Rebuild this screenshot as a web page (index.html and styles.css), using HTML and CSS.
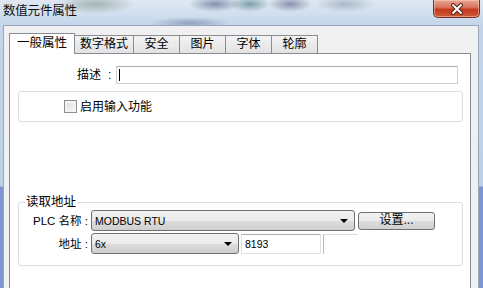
FILE: index.html
```html
<!DOCTYPE html>
<html lang="zh-CN">

<head>
	<meta charset="UTF-8">
	<meta name="viewport" content="width=device-width, initial-scale=1.0">
	<title>数值元件属性</title>
	<link rel="stylesheet" href="styles.css">
</head>

<body>
	<div class="window">
		<div class="titlebar">
			<span class="title">数值元件属性</span>
			<div class="close-btn">
				<svg width="18" height="12" viewBox="0 0 18 12">
					<path d="M5 2 L13 10 M13 2 L5 10" stroke="#5a2418" stroke-width="4" stroke-linecap="round" />
					<path d="M5 2 L13 10 M13 2 L5 10" stroke="#fff" stroke-width="2" stroke-linecap="round" />
				</svg>
			</div>
		</div>
		<div class="frame">
			<div class="client">
				<div class="tabs">
					<div class="tab active">一般属性</div>
					<div class="tab">数字格式</div>
					<div class="tab">安全</div>
					<div class="tab">图片</div>
					<div class="tab">字体</div>
					<div class="tab">轮廓</div>
				</div>
				<div class="panel">
					<div class="desc-row">
						<span class="lbl">描述<span class="colon">:</span></span>
						<div class="textbox desc"><span class="caret"></span></div>
					</div>
					<div class="group input-group">
						<span class="checkbox"></span>
						<span>启用输入功能</span>
					</div>
					<fieldset class="group addr-group">
						<legend>读取地址</legend>
						<div class="addr-grid">
							<span class="lbl">PLC 名称 :</span>
							<div class="ctrl-row">
								<div class="combo plc">MODBUS RTU<span class="arrow"></span></div>
								<div class="btn">设置...</div>
							</div>
							<span class="lbl">地址 :</span>
							<div class="ctrl-row">
								<div class="combo addr">6x<span class="arrow"></span></div>
								<div class="textbox num">8193</div>
								<div class="ghost"></div>
							</div>
						</div>
					</fieldset>
				</div>
			</div>
		</div>
	</div>
</body>

</html>
```

FILE: styles.css
```css
:root {
	--glass: #c4d5ea;
	--glass-dark: #7d95d3;
	--face: #f0f0f0;
	--tab-border: #898c95;
	--group-border: #d5dfe5;
	--ctrl-border: #707070;
	--font: "Liberation Sans", "Noto Sans CJK SC", sans-serif;
}

* {
	box-sizing: border-box;
}

body {
	margin: 0;
	padding: 0;
	font-family: var(--font);
	font-size: 12px;
	color: #000;
}

.window {
	display: flex;
	flex-direction: column;
	width: 483px;
	height: 288px;
	overflow: hidden;
	background: linear-gradient(to bottom, var(--glass) 0, #bcd0ea 186px, var(--glass-dark) 187px, var(--glass-dark) 100%);
}

/* Aero glass title bar */
.titlebar {
	display: flex;
	align-items: flex-start;
	height: 25px;
	padding-left: 3px;
	background:
		radial-gradient(ellipse 40px 10px at 95px 4px, rgba(120, 140, 130, .55), transparent),
		radial-gradient(ellipse 26px 8px at 215px 4px, rgba(70, 90, 130, .6), transparent),
		radial-gradient(ellipse 20px 8px at 250px 4px, rgba(60, 110, 120, .6), transparent),
		radial-gradient(ellipse 22px 8px at 290px 4px, rgba(80, 90, 130, .6), transparent),
		radial-gradient(ellipse 30px 8px at 345px 4px, rgba(120, 140, 160, .5), transparent),
		radial-gradient(ellipse 40px 6px at 190px 23px, rgba(80, 100, 130, .45), transparent),
		linear-gradient(to bottom, #dfe8f1 0, #d3e0ee 12px, #c3d6ec 25px);
}

.title {
	padding-top: 3px;
	font-size: 12.5px;
	line-height: 16px;
	color: #111;
	letter-spacing: -.2px;
}

.close-btn {
	display: flex;
	align-items: center;
	justify-content: center;
	width: 47px;
	height: 18px;
	margin-left: auto;
	margin-right: 3px;
	border: 1px solid #7a3224;
	border-top: none;
	border-radius: 0 0 5px 5px;
	background: linear-gradient(to bottom, #e9a896 0, #d7705a 45%, #c1391e 55%, #cf5a35 100%);
	box-shadow: inset 0 0 0 1px rgba(255, 220, 210, .45);
}

.frame {
	display: flex;
	flex: 1;
	padding: 0 4px 0 3px;
}

.client {
	display: flex;
	flex-direction: column;
	flex: 1;
	padding: 7px 7px 0 5px;
	background: var(--face);
	border: 1px solid #9aa7b8;
	border-bottom: none;
}

/* Tabs */
.tabs {
	display: flex;
	align-items: flex-end;
	height: 20px;
}

.tab {
	height: 18px;
	min-width: 47px;
	padding: 0 5px;
	margin-left: -1px;
	line-height: 16px;
	text-align: center;
	border: 1px solid var(--tab-border);
	border-bottom: none;
	background: linear-gradient(to bottom, #f3f3f3, #e2e2e2);
}

.tab.active {
	position: relative;
	z-index: 1;
	height: 21px;
	margin-left: 0;
	margin-bottom: -1px;
	padding: 1px 7px 0;
	background: #fff;
	font-size: 12.5px;
}

.panel {
	flex: 1;
	background: #fff;
	border: 1px solid var(--tab-border);
	border-bottom: none;
}

.lbl {
	line-height: 16px;
	white-space: nowrap;
}

.colon {
	margin-left: 7px;
}

.desc-row {
	display: flex;
	align-items: center;
	gap: 5px;
	margin: 12px 12px 0 67px;
}

.textbox {
	height: 18px;
	background: #fff;
	border: 1px solid #dfe3e8;
	border-top-color: #abadb3;
	border-left-color: #e2e3ea;
}

.desc {
	flex: 1;
	border-color: #abadb3 #c5d2dc #c5d2dc #c5d2dc;
	padding: 2px 0 0 2px;
}

.caret {
	display: block;
	width: 1px;
	height: 12px;
	background: #000;
}

.group {
	margin: 7px 7px 0 8px;
	border: 1px solid var(--group-border);
	border-radius: 3px;
}

.input-group {
	display: flex;
	align-items: center;
	gap: 3px;
	height: 31px;
	padding-left: 45px;
	line-height: 16px;
}

.checkbox {
	width: 13px;
	height: 13px;
	border: 1px solid #8f8f8f;
	background: linear-gradient(135deg, #dcdcdc, #f8f8f8);
	box-shadow: inset 0 0 0 2px #f4f4f4;
}

.addr-group {
	margin-top: 73px;
	padding: 1px 0 11px;
	min-width: 0;
}

.addr-group legend {
	margin-left: 6px;
	padding: 0 1px;
	line-height: 14px;
	font-size: 12.5px;
}

.addr-grid {
	display: grid;
	grid-template-columns: 69px auto;
	column-gap: 3px;
	row-gap: 2px;
	align-items: center;
}

.addr-grid .lbl {
	text-align: right;
	font-size: 11.5px;
}

.ctrl-row {
	display: flex;
	align-items: center;
	gap: 3px;
}

.combo {
	display: flex;
	align-items: center;
	justify-content: space-between;
	height: 21px;
	padding: 0 6px 0 3px;
	font-size: 10.5px;
	border: 1px solid var(--ctrl-border);
	border-radius: 3px;
	background: linear-gradient(to bottom, #f2f2f2 0, #ebebeb 50%, #dddddd 51%, #cfcfcf 100%);
}

.plc {
	width: 264px;
}

.addr {
	width: 148px;
}

.arrow {
	width: 0;
	height: 0;
	border-left: 4px solid transparent;
	border-right: 4px solid transparent;
	border-top: 4px solid #000;
}

.btn {
	width: 77px;
	height: 18px;
	line-height: 15px;
	text-align: center;
	border: 1px solid var(--ctrl-border);
	border-radius: 3px;
	background: linear-gradient(to bottom, #f2f2f2 0, #ebebeb 50%, #dddddd 51%, #cfcfcf 100%);
}

.num {
	width: 80px;
	height: 20px;
	padding: 2px 0 0 3px;
	font-size: 10.5px;
	line-height: 14px;
	margin-left: -1px;
}

.ghost {
	width: 35px;
	height: 20px;
	margin-left: -1px;
	border-left: 1px solid #b9b9b9;
	border-top: 1px solid #dcdcdc;
}
```
